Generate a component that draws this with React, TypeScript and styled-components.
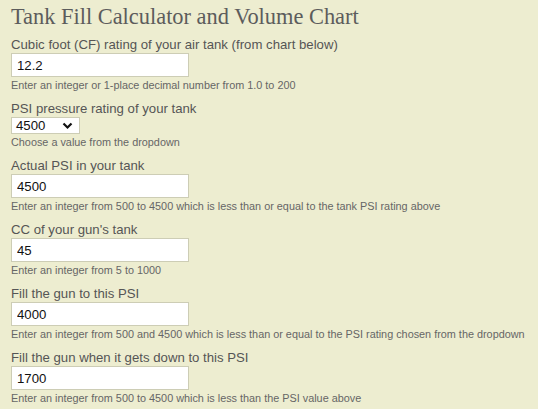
import React from "react";
import styled, { createGlobalStyle } from "styled-components";

const Global = createGlobalStyle`
  html, body { margin: 0; padding: 0; background: #ededd0; }
  body { font-family: "Liberation Sans", Arial, sans-serif; }
`;

const Page = styled.div`
  padding: 3px 11px 0 11px;
  color: #555;
`;

const Title = styled.h1`
  margin: 0 0 6px 0;
  font-family: "Liberation Serif", "Times New Roman", serif;
  font-weight: normal;
  font-size: 22.4px;
  line-height: 28px;
  color: #5c5c5c;
`;

const Field = styled.div`
  display: flex;
  flex-direction: column;
  align-items: flex-start;
  margin-bottom: 9px;
`;

const Label = styled.label`
  font-size: 13.2px;
  line-height: 16px;
  color: #555;
`;

const TextInput = styled.input`
  box-sizing: border-box;
  width: 178px;
  height: 24px;
  margin: 0;
  padding: 0 5px;
  border: 1px solid #cdcdb5;
  background: #fff;
  font-family: "Liberation Sans", Arial, sans-serif;
  font-size: 13.2px;
  color: #111;
  outline: none;
`;

const SelectBox = styled.div`
  box-sizing: border-box;
  width: 69px;
  height: 17px;
  border: 1px solid #cdcdb5;
  background: #fff;
  display: flex;
  align-items: center;
  justify-content: space-between;
  padding: 0 6px 0 4px;
  font-size: 13.2px;
  color: #111;
`;

const Hint = styled.div`
  font-size: 10.85px;
  line-height: 13px;
  margin-top: 2px;
  color: #666;
  white-space: nowrap;
`;

const fields: { label: string; value: string; hint: string; select?: boolean }[] = [
  {
    label: "Cubic foot (CF) rating of your air tank (from chart below)",
    value: "12.2",
    hint: "Enter an integer or 1-place decimal number from 1.0 to 200",
  },
  {
    label: "PSI pressure rating of your tank",
    value: "4500",
    hint: "Choose a value from the dropdown",
    select: true,
  },
  {
    label: "Actual PSI in your tank",
    value: "4500",
    hint: "Enter an integer from 500 to 4500 which is less than or equal to the tank PSI rating above",
  },
  {
    label: "CC of your gun's tank",
    value: "45",
    hint: "Enter an integer from 5 to 1000",
  },
  {
    label: "Fill the gun to this PSI",
    value: "4000",
    hint: "Enter an integer from 500 and 4500 which is less than or equal to the PSI rating chosen from the dropdown",
  },
  {
    label: "Fill the gun when it gets down to this PSI",
    value: "1700",
    hint: "Enter an integer from 500 to 4500 which is less than the PSI value above",
  },
];

const Chevron = () => (
  <svg width="11" height="8" viewBox="0 0 11 8">
    <path d="M1.5 1.5 L5.5 5.5 L9.5 1.5" fill="none" stroke="#111" strokeWidth="2.2" />
  </svg>
);

export default function App() {
  return (
    <Page>
      <Global />
      <Title>Tank Fill Calculator and Volume Chart</Title>
      {fields.map((f) => (
        <Field key={f.label}>
          <Label>{f.label}</Label>
          {f.select ? (
            <SelectBox>
              <span>{f.value}</span>
              <Chevron />
            </SelectBox>
          ) : (
            <TextInput defaultValue={f.value} />
          )}
          <Hint>{f.hint}</Hint>
        </Field>
      ))}
    </Page>
  );
}
